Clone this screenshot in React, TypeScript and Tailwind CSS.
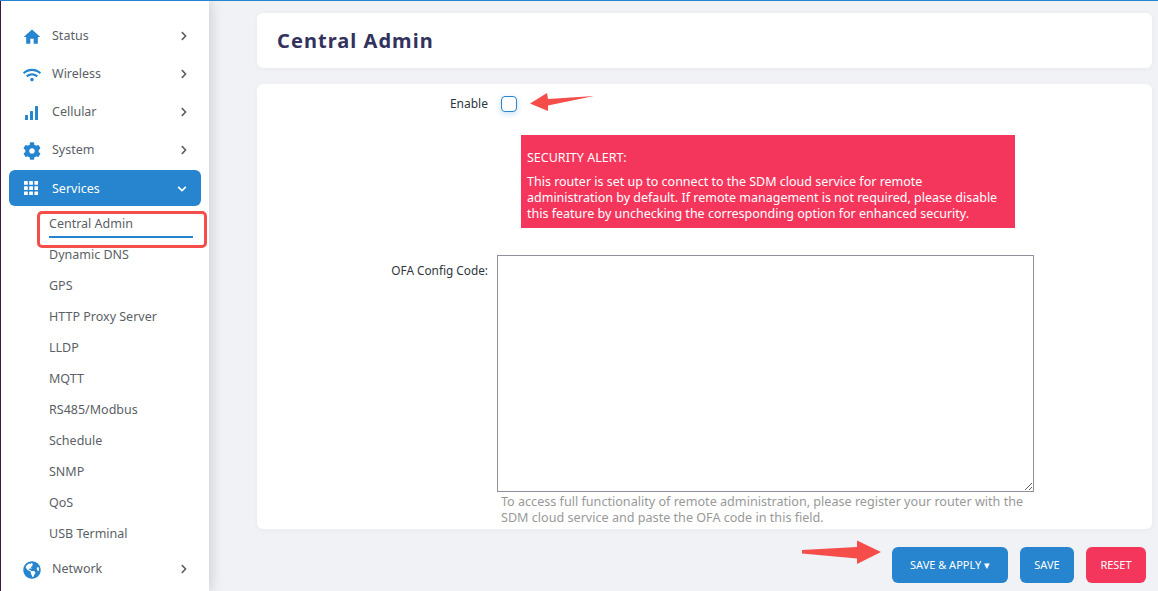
import { FaChevronDown, FaChevronRight, FaCog, FaGlobeAmericas, FaWifi } from 'react-icons/fa';
import { MdHome } from 'react-icons/md';
import type { ReactNode } from 'react';

const subItems = ['Dynamic DNS', 'GPS', 'HTTP Proxy Server', 'LLDP', 'MQTT', 'RS485/Modbus', 'Schedule', 'SNMP', 'QoS', 'USB Terminal'];

function SignalIcon() {
  return (
    <svg width="16" height="16" viewBox="0 0 16 16" fill="#2685ce">
      <rect x="2" y="10" width="3" height="5" rx="0.5" />
      <rect x="7" y="6" width="3" height="9" rx="0.5" />
      <rect x="12" y="1" width="3" height="14" rx="0.5" />
    </svg>
  );
}

function GridIcon() {
  const cells = [0, 5.2, 10.4];
  return (
    <svg width="14" height="14" viewBox="0 0 14 14" fill="white">
      {cells.map((y) => cells.map((x) => <rect key={`${x}-${y}`} x={x} y={y} width="3.8" height="3.8" rx="0.6" />))}
    </svg>
  );
}

function NavItem({ icon, label }: { icon: ReactNode; label: string }) {
  return (
    <div className="flex h-[38px] items-center pl-[22px] pr-[20px] text-[#5b5f66]">
      <span className="flex w-[29px] items-center text-[#2685ce]">{icon}</span>
      <span className="flex-1 text-[12.5px] pb-[2px]">{label}</span>
      <FaChevronRight size={10} className="mb-[3px] text-[#5b5f66]" />
    </div>
  );
}

export default function App() {
  return (
    <div className="relative flex h-[591px] w-[1158px] overflow-hidden border-t border-[#2685ce] bg-[#f1f2f5] font-['Noto_Sans',sans-serif]">
      {/* Sidebar */}
      <aside className="w-[209px] shrink-0 border-l border-[#3a1a3e] bg-white pt-[17px] shadow-[2px_0_12px_rgba(0,0,0,0.15)]">
        <NavItem icon={<MdHome size={20} className="-ml-[1px]" />} label="Status" />
        <NavItem icon={<FaWifi size={18} />} label="Wireless" />
        <NavItem icon={<SignalIcon />} label="Cellular" />
        <NavItem icon={<FaCog size={18} />} label="System" />

        <div className="mx-[8px] flex h-[36px] items-center rounded-md bg-[#2685ce] pl-[15px] pr-[14px] text-white">
          <span className="flex w-[28px] items-center"><GridIcon /></span>
          <span className="flex-1 pt-[3px] text-[12.5px]">Services</span>
          <FaChevronDown size={10} className="mt-[2px]" />
        </div>

        <div className="relative mt-[6px] ml-[48px] mr-[16px] h-[26px] border-b-2 border-[#2685ce] text-[12.5px] leading-[24px] text-[#5b5f66]">
          Central Admin
          <div className="absolute -left-[12px] -right-[14px] -top-[1px] h-[37px] rounded-[5px] border-[3px] border-[#f44d4a]" />
        </div>

        <div className="mt-[2px]">
          {subItems.map((s) => (
            <div key={s} className="flex h-[31px] items-center pl-[48px] text-[12.5px] text-[#5b5f66]">
              {s}
            </div>
          ))}
        </div>

        <div className="mt-[1px]">
          <NavItem icon={<FaGlobeAmericas size={18} />} label="Network" />
        </div>
      </aside>

      {/* Main */}
      <main className="flex flex-1 flex-col pl-[48px] pr-[6px] pt-[12px]">
        <div className="flex h-[55px] items-center rounded-md bg-white pl-[20px] shadow-[0_1px_6px_rgba(0,0,0,0.04)]">
          <h1 className="text-[20px] font-bold tracking-[1.05px] text-[#32325d]">Central Admin</h1>
        </div>

        <div className="mt-[16px] h-[445px] rounded-md bg-white shadow-[0_1px_6px_rgba(0,0,0,0.04)]">
          <div className="flex h-[40px] items-center">
            <label className="w-[231px] text-right text-[12px] text-[#2f3640]">Enable</label>
            <span className="ml-[13px] h-[16px] w-[16px] rounded-[4px] border border-[#2685ce] bg-white shadow-[0_2px_6px_rgba(38,133,206,0.25)]" />
          </div>

          <div className="ml-[264px] mt-[11px] h-[93px] w-[494px] bg-[#f5365c] px-[6px] pt-[15px] text-[12.5px] leading-[16px] text-white">
            <p className="mb-[8px]">SECURITY ALERT:</p>
            <p>This router is set up to connect to the SDM cloud service for remote administration by default. If remote management is not required, please disable this feature by unchecking the corresponding option for enhanced security.</p>
          </div>

          <div className="mt-[27px] flex items-start">
            <label className="w-[231px] pt-[7px] text-right text-[11.8px] text-[#2f3640]">OFA Config Code:</label>
            <div className="ml-[9px] w-[537px]">
              <textarea className="block h-[237px] w-[537px] border border-[#8f8f9d] bg-white outline-none" />
              <p className="ml-[4px] mt-[2px] w-[532px] text-[12.6px] leading-[16px] text-[#999]">To access full functionality of remote administration, please register your router with the SDM cloud service and paste the OFA code in this field.</p>
            </div>
          </div>
        </div>

        <div className="mt-[18px] mr-[6px] flex justify-end gap-[12px]">
          <button className="h-[36px] w-[116px] rounded-md bg-[#2685ce] text-[11px] text-white">SAVE &amp; APPLY ▾</button>
          <button className="h-[36px] w-[54px] rounded-md bg-[#2685ce] text-[11px] text-white">SAVE</button>
          <button className="h-[36px] w-[60px] rounded-md bg-[#f5365c] text-[11px] text-white">RESET</button>
        </div>
      </main>

      {/* Annotation arrows */}
      <svg className="absolute left-[528px] top-[90px]" width="68" height="22" viewBox="0 0 68 22" fill="#f44d4a">
        <polygon points="2,12.5 19,2 20,8 66,5 20,14.5 20,20" />
      </svg>
      <svg className="absolute left-[800px] top-[538px]" width="84" height="28" viewBox="0 0 84 28" fill="#f44d4a">
        <polygon points="2,11 57,8 57,1.5 81,13 57,25 57,19.5 2,14.5" />
      </svg>
    </div>
  );
}
